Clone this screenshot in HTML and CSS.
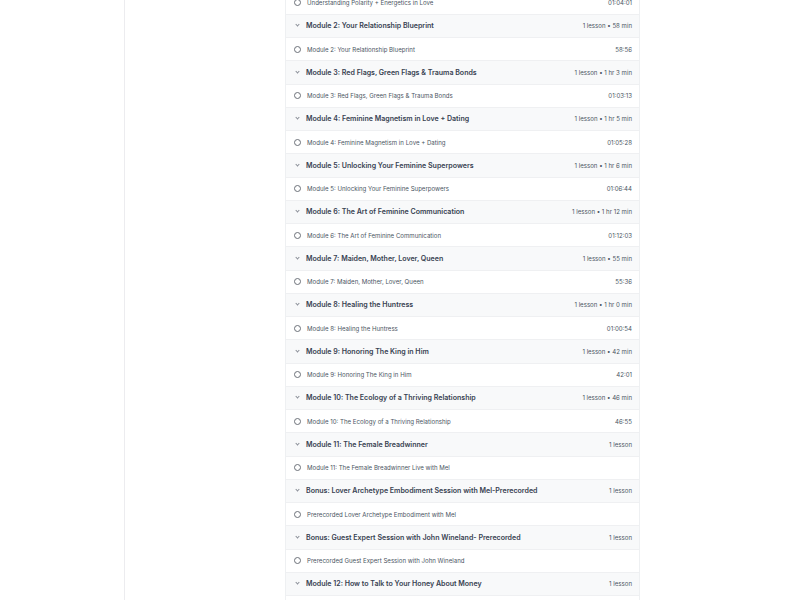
FILE: index.html
```html
<!DOCTYPE html>
<html>
<head>
<meta charset="utf-8">
<link rel="stylesheet" href="styles.css">
</head>
<body>
<div class="page">
  <aside class="sidebar"></aside>
  <main class="main">
    <div class="list">
      <div class="lesson"><span class="circle"></span><span class="lt">Understanding Polarity + Energetics in Love</span><span class="dur">01:04:01</span></div>

      <div class="module"><span class="chev"></span><span class="mt">Module 2: Your Relationship Blueprint</span><span class="meta">1 lesson • 58 min</span></div>
      <div class="lesson"><span class="circle"></span><span class="lt">Module 2: Your Relationship Blueprint</span><span class="dur">58:56</span></div>

      <div class="module"><span class="chev"></span><span class="mt">Module 3: Red Flags, Green Flags &amp; Trauma Bonds</span><span class="meta">1 lesson • 1 hr 3 min</span></div>
      <div class="lesson"><span class="circle"></span><span class="lt">Module 3: Red Flags, Green Flags &amp; Trauma Bonds</span><span class="dur">01:03:13</span></div>

      <div class="module"><span class="chev"></span><span class="mt">Module 4: Feminine Magnetism in Love + Dating</span><span class="meta">1 lesson • 1 hr 5 min</span></div>
      <div class="lesson"><span class="circle"></span><span class="lt">Module 4: Feminine Magnetism in Love + Dating</span><span class="dur">01:05:28</span></div>

      <div class="module"><span class="chev"></span><span class="mt">Module 5: Unlocking Your Feminine Superpowers</span><span class="meta">1 lesson • 1 hr 6 min</span></div>
      <div class="lesson"><span class="circle"></span><span class="lt">Module 5: Unlocking Your Feminine Superpowers</span><span class="dur">01:06:44</span></div>

      <div class="module"><span class="chev"></span><span class="mt">Module 6: The Art of Feminine Communication</span><span class="meta">1 lesson • 1 hr 12 min</span></div>
      <div class="lesson"><span class="circle"></span><span class="lt">Module 6: The Art of Feminine Communication</span><span class="dur">01:12:03</span></div>

      <div class="module"><span class="chev"></span><span class="mt">Module 7: Maiden, Mother, Lover, Queen</span><span class="meta">1 lesson • 55 min</span></div>
      <div class="lesson"><span class="circle"></span><span class="lt">Module 7: Maiden, Mother, Lover, Queen</span><span class="dur">55:36</span></div>

      <div class="module"><span class="chev"></span><span class="mt">Module 8: Healing the Huntress</span><span class="meta">1 lesson • 1 hr 0 min</span></div>
      <div class="lesson"><span class="circle"></span><span class="lt">Module 8: Healing the Huntress</span><span class="dur">01:00:54</span></div>

      <div class="module"><span class="chev"></span><span class="mt">Module 9: Honoring The King in Him</span><span class="meta">1 lesson • 42 min</span></div>
      <div class="lesson"><span class="circle"></span><span class="lt">Module 9: Honoring The King in Him</span><span class="dur">42:01</span></div>

      <div class="module"><span class="chev"></span><span class="mt">Module 10: The Ecology of a Thriving Relationship</span><span class="meta">1 lesson • 46 min</span></div>
      <div class="lesson"><span class="circle"></span><span class="lt">Module 10: The Ecology of a Thriving Relationship</span><span class="dur">46:55</span></div>

      <div class="module"><span class="chev"></span><span class="mt">Module 11: The Female Breadwinner</span><span class="meta">1 lesson</span></div>
      <div class="lesson"><span class="circle"></span><span class="lt">Module 11: The Female Breadwinner Live with Mel</span><span class="dur"></span></div>

      <div class="module"><span class="chev"></span><span class="mt">Bonus: Lover Archetype Embodiment Session with Mel-Prerecorded</span><span class="meta">1 lesson</span></div>
      <div class="lesson"><span class="circle"></span><span class="lt">Prerecorded Lover Archetype Embodiment with Mel</span><span class="dur"></span></div>

      <div class="module"><span class="chev"></span><span class="mt">Bonus: Guest Expert Session with John Wineland- Prerecorded</span><span class="meta">1 lesson</span></div>
      <div class="lesson"><span class="circle"></span><span class="lt">Prerecorded Guest Expert Session with John Wineland</span><span class="dur"></span></div>

      <div class="module"><span class="chev"></span><span class="mt">Module 12: How to Talk to Your Honey About Money</span><span class="meta">1 lesson</span></div>
      <div class="lesson"><span class="circle"></span><span class="lt"></span><span class="dur"></span></div>
    </div>
  </main>
</div>
</body>
</html>
```
FILE: styles.css
```css
* { box-sizing: border-box; }
html, body { margin: 0; padding: 0; background: #fff; overflow: hidden; }
body { font-family: Inter, "Noto Sans", sans-serif; }
.page { display: flex; height: 600px; }
.sidebar { width: 125px; flex: none; border-right: 1px solid #ececef; }
.main { flex: 1; padding-left: 160px; }
.list {
  width: 355px;
  margin-top: -8.5px;
  border-left: 1px solid #eef0f2;
  border-right: 1px solid #eef0f2;
}
.module, .lesson {
  display: flex;
  align-items: center;
  height: 23.25px;
  border-bottom: 1px solid #eff0f2;
  padding: 0 7px 0 8px;
}
.module { background: #f8f9fa; }
.lesson { background: #fff; }
.chev {
  width: 3px; height: 3px;
  border-right: 1px solid #8a8f98;
  border-bottom: 1px solid #8a8f98;
  transform: rotate(45deg);
  margin: -2px 7px 0 2px;
  flex: none;
}
.circle {
  width: 7px; height: 7px;
  border: 1px solid #6b7078;
  border-radius: 50%;
  margin-right: 6px;
  flex: none;
}
.mt { font-size: 7.05px; font-weight: 600; color: #374151; flex: 1; white-space: nowrap; }
.lt { font-size: 6.1px; color: #4b5563; flex: 1; white-space: nowrap; }
.meta, .dur { font-size: 6.1px; color: #4b5563; white-space: nowrap; }
```
